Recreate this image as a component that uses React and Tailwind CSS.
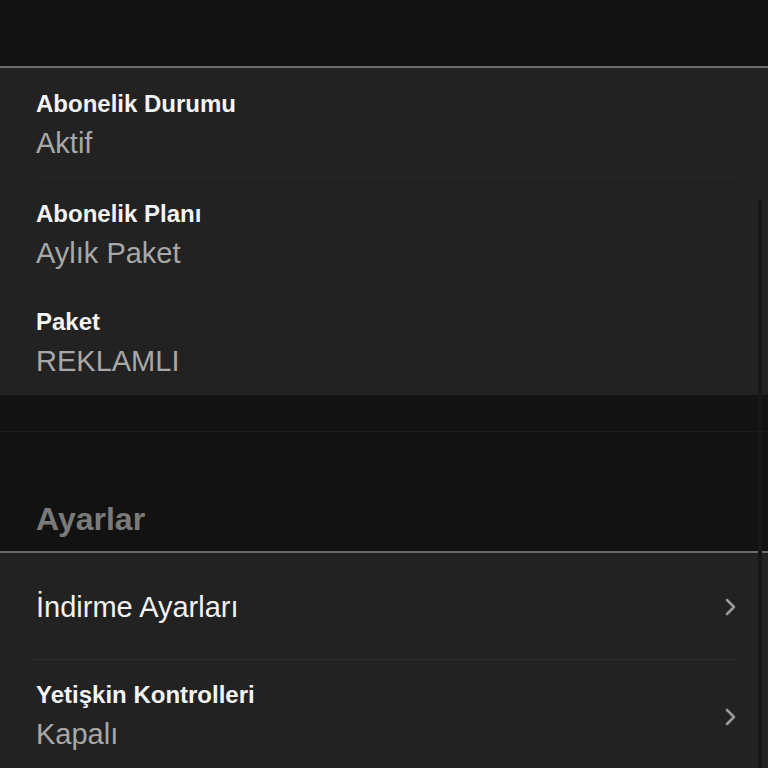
import React from "react";

const font = { fontFamily: '"Liberation Sans", Arial, sans-serif' };

function Chevron() {
  return (
    <svg width="14" height="20" viewBox="0 0 14 20" fill="none" className="shrink-0">
      <path d="M3 3l7 7-7 7" stroke="#9a9a9a" strokeWidth="2.6" strokeLinecap="round" strokeLinejoin="round" />
    </svg>
  );
}

function InfoItem({ label, value, border }) {
  return (
    <div className="h-[109px] pl-9 pr-7">
      <div className={"h-full pt-[22px] " + (border ? "border-t border-[#282828]" : "")}>
        <div className="text-[24px] leading-[28px] font-bold text-[#f4f4f4]">{label}</div>
        <div className="mt-2 text-[29px] leading-[34px] text-[#a8a8a8]">{value}</div>
      </div>
    </div>
  );
}

export default function App() {
  const info = [
    { label: "Abonelik Durumu", value: "Aktif" },
    { label: "Abonelik Planı", value: "Aylık Paket" },
    { label: "Paket", value: "REKLAMLI" },
  ];

  return (
    <div className="relative w-[768px] h-[768px] overflow-hidden bg-[#121212]" style={font}>
      <div className="h-[66px]" />
      <div className="h-[2px] bg-[#6a6a6a]" />

      <div className="bg-[#222222] h-[327px] flex flex-col">
        {info.map((item, i) => (
          <InfoItem key={i} label={item.label} value={item.value} border={i === 1} />
        ))}
      </div>

      <div className="h-[36px]" />
      <div className="h-px bg-[#1d1d1d]" />
      <div className="h-[119px] flex items-end pl-9 pb-[14px]">
        <h2 className="text-[32px] leading-[36px] font-bold text-[#7a7a7a]">Ayarlar</h2>
      </div>
      <div className="h-[2px] bg-[#6a6a6a]" />

      <div className="bg-[#222222] h-[215px]">
        <div className="pl-8 pr-7">
          <div className="h-[107px] flex items-center justify-between border-b border-[#2c2c2c]">
            <span className="pl-1 text-[29px] leading-[34px] text-[#f2f2f2] mt-[2px]">İndirme Ayarları</span>
            <span className="mr-[2px] mt-[2px]"><Chevron /></span>
          </div>
          <div className="h-[108px] flex items-start justify-between pt-[21px] pl-1">
            <div>
              <div className="text-[24px] leading-[28px] font-bold text-[#f4f4f4]">Yetişkin Kontrolleri</div>
              <div className="mt-2 text-[29px] leading-[34px] text-[#a8a8a8]">Kapalı</div>
            </div>
            <span className="mr-[2px] mt-[26px]"><Chevron /></span>
          </div>
        </div>
      </div>

      <div className="absolute right-[6px] top-[200px] bottom-0 w-[4px] bg-[#171717]" />
    </div>
  );
}
